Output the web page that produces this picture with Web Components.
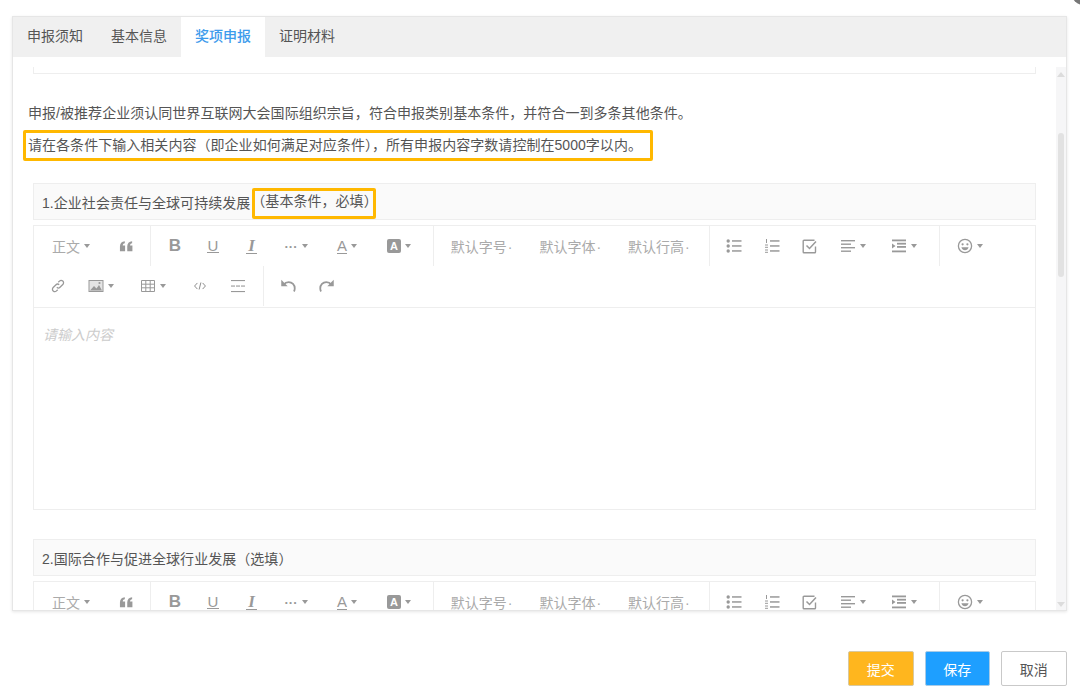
<!DOCTYPE html>
<html lang="zh">
<head>
<meta charset="utf-8">
<title>奖项申报</title>
<style>
    html, body { margin: 0; height: 100%; background: #fff; }
    body { font-family: "Liberation Sans", "Noto Sans CJK SC", sans-serif; color: #555; }
</style>
</head>
<body>
<award-page></award-page>

<script>
const ICONS = {
    quote: '<path d="M1 13V8C1 4.7 2.8 2.8 6.2 2.4v2.1C4.700 4.800 4 5.600 4 7h2.500v6zM8.800 13V8c0-3.300 1.800-5.200 5.200-5.600v2.100c-1.500.3-2.200 1.100-2.200 2.500h2.500v6z" fill="#999"/>',
    bullet: '<g fill="#999"><circle cx="2.200" cy="3" r="1.700"/><circle cx="2.200" cy="8" r="1.700"/><circle cx="2.200" cy="13" r="1.700"/><rect x="6" y="2.200" width="9.500" height="1.500"/><rect x="6" y="7.200" width="9.500" height="1.500"/><rect x="6" y="12.200" width="9.500" height="1.500"/></g>',
    number: '<g fill="#999"><rect x="6" y="2.200" width="9.500" height="1.500"/><rect x="6" y="7.200" width="9.500" height="1.500"/><rect x="6" y="12.200" width="9.500" height="1.500"/><rect x="2" y="1" width="1" height="4"/><rect x="1" y="6.500" width="3" height="1"/><rect x="1" y="8.800" width="3" height="1"/><rect x="1" y="11.500" width="3" height="1"/><rect x="1" y="13.800" width="3" height="1"/></g>',
    check: '<path d="M13.500 8.500V14a.8.8 0 0 1-.8.8H2a.8.8 0 0 1-.8-.8V3A.8.8 0 0 1 2 2.200h10.500" fill="none" stroke="#999" stroke-width="1.400"/><path d="M4.500 7.500l3 3 6.500-7" fill="none" stroke="#999" stroke-width="1.500"/>',
    align: '<g fill="#999"><rect x="1" y="2" width="14" height="1.400"/><rect x="1" y="5.500" width="10" height="1.400"/><rect x="1" y="9" width="14" height="1.400"/><rect x="1" y="12.500" width="10" height="1.400"/></g>',
    indent: '<g fill="#999"><rect x="1" y="1.500" width="14" height="1.800"/><rect x="6" y="4.800" width="9" height="1.800"/><rect x="6" y="8" width="9" height="1.800"/><rect x="1" y="12.500" width="14" height="1.800"/><path d="M1 5.500l3.500 2.500L1 10.500z"/></g>',
    emoji: '<circle cx="8" cy="8" r="6.600" fill="none" stroke="#999" stroke-width="1.300"/><circle cx="5.600" cy="6.300" r="1.100" fill="#999"/><circle cx="10.400" cy="6.300" r="1.100" fill="#999"/><path d="M4.400 9.300h7.200c-.5 2-1.900 3-3.600 3s-3.100-1-3.600-3z" fill="#999"/>',
    link: '<path d="M6.800 9.300c1 1 2.300.9 3.200 0l2.800-2.800c1-1 1-2.500 0-3.400s-2.400-.9-3.300 0L8.300 4.300M9.200 6.700c-1-1-2.300-.9-3.200 0L3.200 9.500c-1 1-1 2.500 0 3.400s2.400.9 3.300 0l1.200-1.200" fill="none" stroke="#999" stroke-width="1.300"/>',
    image: '<rect x="1" y="2.500" width="14" height="11" fill="#e4e4e4" stroke="#999"/><path d="M2 12.500l4-4.500 2.500 2.500 2.500-3.500 3 5.500z" fill="#999"/><circle cx="11.500" cy="5" r="1.100" fill="#999"/>',
    table: '<path d="M1.500 2.500h13v11h-13zM1.500 6.200h13M1.500 9.800h13M5.800 2.500v11M10.200 2.500v11" fill="none" stroke="#999"/>',
    code: '<path d="M5 4.500L1.800 8 5 11.500M11 4.500L14.200 8 11 11.500M9 4L7 12" fill="none" stroke="#888" stroke-width="1.100"/>',
    hr: '<g fill="#999"><rect x="1" y="2" width="14" height="1.100"/><rect x="1" y="7.500" width="4" height="1.100"/><rect x="6" y="7.500" width="4" height="1.100"/><rect x="11" y="7.500" width="4" height="1.100"/><rect x="1" y="13" width="14" height="1.100"/></g>',
    undo: '<path d="M4 7c1.200-1.600 2.700-2.500 4.600-2.500 3.100 0 5.400 2.400 5.400 5.500 0 1-.2 2-.7 2.800" fill="none" stroke="#999" stroke-width="1.600"/><path d="M2 2.500v5.700h5.700z" fill="#999"/>',
    redo: '<path d="M12 7c-1.200-1.600-2.700-2.500-4.600-2.500C4.300 4.500 2 6.900 2 10c0 1 .2 2 .7 2.800" fill="none" stroke="#999" stroke-width="1.600"/><path d="M14 2.500v5.700H8.300z" fill="#999"/>'
};

function icon(name, size) {
    const s = size || 16;
    return `<svg width="${s}" height="${s}" viewBox="0 0 16 16">${ICONS[name]}</svg>`;
}

const CARET = '<i class="caret"></i>';

// rows > groups > cells: [width, html]
const TOOLBAR = [
    [
        { pad: '0 6px 0 0', cells: [[74, '<span class="txt">正文</span>' + CARET], [36, icon('quote', 15)]] },
        { pad: '0 8px 0 5px', cells: [
            [38, '<b class="b">B</b>'],
            [38, '<span class="u">U</span>'],
            [39, '<span class="i">I</span>'],
            [50, '<span class="dots">···</span>' + CARET],
            [52, '<span class="a">A</span>' + CARET],
            [52, '<span class="bg">A</span>' + CARET]
        ] },
        { pad: '0 6px 0 3px', cells: [
            [89, '<span class="txt">默认字号<em>·</em></span>'],
            [88.5, '<span class="txt">默认字体<em>·</em></span>'],
            [88.5, '<span class="txt">默认行高<em>·</em></span>']
        ] },
        { pad: '0 10px 0 5px', cells: [
            [38, icon('bullet')], [38, icon('number')], [37, icon('check')],
            [50, icon('align') + CARET], [51, icon('indent') + CARET]
        ] },
        { pad: '0 0 0 5px', last: true, cells: [[50, icon('emoji') + CARET]] }
    ],
    [
        { pad: '0 6px 0 5px', cells: [
            [38, icon('link')], [48, icon('image') + CARET], [56, icon('table') + CARET],
            [38, icon('code', 14)], [38, icon('hr')]
        ] },
        { pad: '0 0 0 5px', last: true, cells: [[38, icon('undo', 18)], [40, icon('redo', 18)]] }
    ]
];

class AwardTabs extends HTMLElement {
    connectedCallback() {
        const active = Number(this.getAttribute('active'));
        const tabs = this.getAttribute('labels').split(',').map((t, i) =>
            `<div class="tab${i === active ? ' on' : ''}">${t}</div>`).join('');
        this.attachShadow({ mode: 'open' }).innerHTML = `
        <style>
            :host { display: flex; height: 40px; background: #f0f0f0; font-size: 14px; color: #555; flex: none; }
            .tab { width: 84px; height: 40px; line-height: 39px; text-align: center; flex: none; }
            .tab.on { background: #fff; color: #3d9bec; font-weight: 500; }
        </style>${tabs}`;
    }
}
customElements.define('award-tabs', AwardTabs);

class NoteMark extends HTMLElement {
    constructor() {
        super();
        this.attachShadow({ mode: 'open' }).innerHTML = `
        <style>
            :host {
                display: inline-block;
                box-sizing: border-box;
                height: 31px;
                line-height: 25px;
                border: 3px solid #ffb800;
                border-radius: 2px;
                white-space: nowrap;
            }
            :host(.line) { width: 630px; padding-left: 2px; margin-left: -10px; }
            :host(.head) { width: 124px; margin: 4px 0 0 2px; line-height: 21px; text-indent: -4px; }
        </style><slot></slot>`;
    }
}
customElements.define('note-mark', NoteMark);

class SectionHead extends HTMLElement {
    constructor() {
        super();
        this.attachShadow({ mode: 'open' }).innerHTML = `
        <style>
            :host {
                display: flex;
                align-items: center;
                box-sizing: border-box;
                height: 37px;
                padding-left: 8px;
                background: #fafafa;
                border: 1px solid #eee;
                font-size: 14px;
                letter-spacing: .04px;
                color: #555;
                white-space: nowrap;
            }
        </style><slot></slot>`;
    }
}
customElements.define('section-head', SectionHead);

class RichEditor extends HTMLElement {
    connectedCallback() {
        const rows = TOOLBAR.map(groups => `<div class="row">${groups.map(g =>
            `<div class="group${g.last ? ' last' : ''}" style="padding:${g.pad}">${g.cells.map(c =>
                `<span class="cell" style="width:${c[0]}px">${c[1]}</span>`).join('')}</div>`).join('')}</div>`).join('');
        this.attachShadow({ mode: 'open' }).innerHTML = `
        <style>
            :host { display: block; box-sizing: border-box; border: 1px solid #eee; background: #fff; color: #999; flex: none; }
            .row { display: flex; height: 40px; }
            .bar { border-bottom: 1px solid #eee; padding-bottom: 1px; }
            .group { display: flex; border-right: 1px solid #eee; }
            .group.last { border-right: 0; }
            .cell { display: flex; align-items: center; justify-content: center; gap: 4px; height: 40px; flex: none; }
            .txt { font-size: 14px; color: #aaa; }
            .txt em { font-style: normal; margin-left: 1px; }
            .caret { width: 0; height: 0; border: 3.5px solid transparent; border-top: 4px solid #999; border-bottom: 0; }
            .b { font: bold 17px "Liberation Sans", sans-serif; color: #999; }
            .u { font: 15px "Liberation Sans", sans-serif; color: #999; border-bottom: 1.5px solid #999; line-height: 13px; padding: 0 1px; }
            .i { font: italic bold 17px "Liberation Serif", serif; color: #999; border-bottom: 1.5px solid #999; line-height: 14px; padding: 0 2px; }
            .dots { font: bold 13px "Liberation Sans", sans-serif; color: #999; }
            .a { font: 15px "Liberation Sans", sans-serif; color: #999; border-bottom: 1.5px solid #999; line-height: 14px; }
            .bg { font: bold 11px/14px "Liberation Sans", sans-serif; color: #fff; background: #999; width: 14px; height: 14px; text-align: center; border-radius: 2px; }
            .body { height: 201px; padding: 16px 9px 0; box-sizing: border-box; font-size: 14px; font-style: italic; color: #ccc; }
        </style>
        <div class="bar">${rows}</div>
        <div class="body">${this.getAttribute('placeholder') || ''}</div>`;
    }
}
customElements.define('rich-editor', RichEditor);

class ScrollTrack extends HTMLElement {
    constructor() {
        super();
        this.attachShadow({ mode: 'open' }).innerHTML = `
        <style>
            :host {
                display: flex;
                flex-direction: column;
                align-items: center;
                width: 10px;
                flex: none;
                background: #f6f6f7;
                box-sizing: border-box;
            }
            .up, .down { width: 0; height: 0; border: 4px solid transparent; flex: none; }
            .up { border-top: 0; border-bottom: 5px solid #dcdcdc; margin-top: 5px; }
            .down { border-bottom: 0; border-top: 5px solid #dcdcdc; margin-bottom: 3px; margin-top: auto; }
            .thumb { width: 6px; height: 144px; margin-top: 56px; background: #e2e2e2; border-radius: 3px; flex: none; }
        </style>
        <div class="up"></div><div class="thumb"></div><div class="down"></div>`;
    }
}
customElements.define('scroll-track', ScrollTrack);

class ActionButton extends HTMLElement {
    constructor() {
        super();
        this.attachShadow({ mode: 'open' }).innerHTML = `
        <style>
            :host {
                display: flex;
                align-items: center;
                justify-content: center;
                box-sizing: border-box;
                width: 65.5px;
                height: 35px;
                font-size: 14px;
                border: 1px solid #c9c9c9;
                border-radius: 2px;
                background: #fff;
                color: #555;
            }
            :host(.warm) { background: #ffb61e; color: #fff; border-color: #d8c9a0; }
            :host(.blue) { background: #1e9fff; color: #fff; border-color: #a9cbe6; }
        </style><slot></slot>`;
    }
}
customElements.define('action-button', ActionButton);

class AwardPage extends HTMLElement {
    constructor() {
        super();
        this.attachShadow({ mode: 'open' }).innerHTML = `
        <style>
            :host { display: block; position: relative; width: 1080px; height: 689px; overflow: hidden; padding: 16px 0 0 12px; box-sizing: border-box; }
            .close { position: absolute; right: -17px; top: -21px; width: 26px; height: 26px; border-radius: 50%; background: #777; }
            .panel {
                box-sizing: border-box;
                width: 1055px;
                height: 595px;
                border: 1px solid #e6e6e6;
                box-shadow: 0 1px 3px rgba(0,0,0,.1);
                display: flex;
                flex-direction: column;
                overflow: hidden;
                background: #fff;
            }
            .main { flex: 1; min-height: 0; display: flex; padding-top: 10px; }
            .scroll { flex: 1; min-width: 0; overflow: hidden; padding: 0 20px; }
            .stub { height: 7px; border: 1px solid #eee; border-top: 0; box-sizing: border-box; }
            .para { font-size: 14px; letter-spacing: .04px; color: #555; line-height: 24px; white-space: nowrap; }
            .p1 { margin: 27px 0 0 -5px; }
            .p2 { margin: 5px 0 0; }
            .gap-a { margin-top: 22px; }
            .ed { margin-top: 5px; }
            .gap-b { margin-top: 29px; }
            .foot { display: flex; justify-content: flex-end; gap: 11px; padding: 40px 13.5px 0 0; }
        </style>
        <div class="close"></div>
        <div class="panel">
            <award-tabs labels="申报须知,基本信息,奖项申报,证明材料" active="2"></award-tabs>
            <div class="main">
                <div class="scroll">
                    <div class="stub"></div>
                    <div class="para p1">申报/被推荐企业须认同世界互联网大会国际组织宗旨，符合申报类别基本条件，并符合一到多条其他条件。</div>
                    <div class="para p2"><note-mark class="line">请在各条件下输入相关内容（即企业如何满足对应条件），所有申报内容字数请控制在5000字以内。</note-mark></div>
                    <section-head class="gap-a">1.企业社会责任与全球可持续发展<note-mark class="head">（基本条件，必填）</note-mark></section-head>
                    <rich-editor class="ed" placeholder="请输入内容"></rich-editor>
                    <section-head class="gap-b">2.国际合作与促进全球行业发展（选填）</section-head>
                    <rich-editor class="ed"></rich-editor>
                </div>
                <scroll-track></scroll-track>
            </div>
        </div>
        <div class="foot">
            <action-button class="warm">提交</action-button>
            <action-button class="blue">保存</action-button>
            <action-button>取消</action-button>
        </div>`;
    }
}
customElements.define('award-page', AwardPage);
</script>
</body>
</html>
